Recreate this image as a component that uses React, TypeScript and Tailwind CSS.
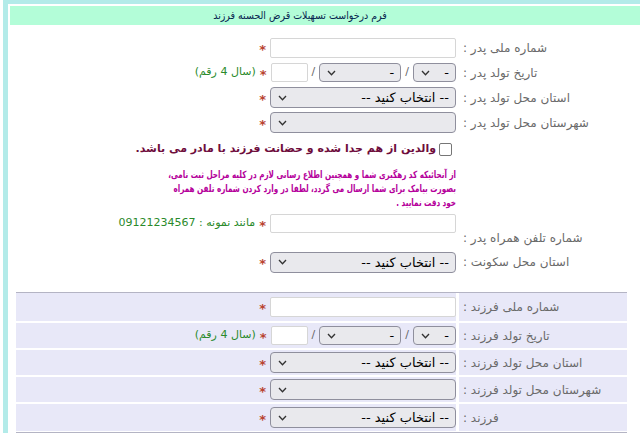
import React from "react";

type Children = { children?: React.ReactNode };

function Chevron() {
  return (
    <svg width="9" height="6" viewBox="0 0 9 6" className="shrink-0">
      <polyline
        points="1,1 4.5,4.8 8,1"
        fill="none"
        stroke="#333"
        strokeWidth="1.3"
      />
    </svg>
  );
}

function Select({
  w,
  h = "h-[21px]",
  text,
}: {
  w: string;
  h?: string;
  text?: string;
}) {
  return (
    <div
      className={`${w} ${h} flex shrink-0 items-center justify-between rounded-[4px] border border-[#8f8f9d] bg-[#e9e9ed] pl-[7px] pr-[6px] text-[13px] text-black`}
    >
      <span className="leading-none">{text}</span>
      <Chevron />
    </div>
  );
}

function TextBox({ w, h = "h-[20px]" }: { w: string; h?: string }) {
  return (
    <div
      className={`${w} ${h} shrink-0 rounded-[2px] border border-[#d6d6d6] bg-white`}
    />
  );
}

function Star() {
  return (
    <span className="mx-[4px] pt-[3px] text-[13px] font-bold leading-none text-[#b8432f]">
      *
    </span>
  );
}

function Hint({ children }: Children) {
  return <span className="text-[11px] text-[#2a8a2a]">{children}</span>;
}

function Row({
  label,
  children,
  h = "h-[25px]",
  shaded = false,
}: {
  label: string;
  children?: React.ReactNode;
  h?: string;
  shaded?: boolean;
}) {
  const bg = shaded ? "bg-[#e8e8f8]" : "";
  return (
    <div className={`flex gap-[3px] ${h}`}>
      <div
        className={`w-[168px] shrink-0 ${bg} flex items-center justify-end pl-[4px] text-[12px] text-[#6a6a6a]`}
      >
        <span>{label}</span>
      </div>
      <div className={`w-[440px] shrink-0 ${bg} flex items-center`}>
        {children}
      </div>
    </div>
  );
}

function DateFields() {
  return (
    <>
      <Select w="w-[43px]" h="h-[19px]" text="-" />
      <span className="mx-[4px] text-[11px] text-[#666]">/</span>
      <Select w="w-[82px]" h="h-[19px]" text="-" />
      <span className="mx-[4px] text-[11px] text-[#666]">/</span>
      <TextBox w="w-[37px]" h="h-[19px]" />
      <Star />
      <Hint>(سال 4 رقم)</Hint>
    </>
  );
}

export default function App() {
  return (
    <div className="h-[435px] w-[640px] overflow-hidden bg-white font-['DejaVu_Sans',sans-serif]">
      <div className="ml-[3px] w-[700px] border-l-[5px] border-t-[4px] border-[#b3ebe9] pt-[2px]">
        {/* header */}
        <div className="ml-[2px] flex h-[19px] items-center bg-[#b3fdd8]">
          <div
            dir="rtl"
            className="w-[580px] text-center font-['DejaVu_Sans_Condensed','DejaVu_Sans',sans-serif] text-[10.5px] leading-none text-[#06244f] font-stretch-condensed"
          >
            فرم درخواست تسهیلات قرض الحسنه فرزند
          </div>
        </div>

        <div className="flex pl-[8px]">
          <div dir="rtl" className="flex flex-col">
            {/* father section */}
            <div className="h-[10px]" />
            <Row label="شماره ملی پدر :">
              <TextBox w="w-[186px]" />
              <Star />
            </Row>
            <Row label="تاریخ تولد پدر :">
              <DateFields />
            </Row>
            <Row label="استان محل تولد پدر :">
              <Select w="w-[186px]" text="-- انتخاب کنید --" />
              <Star />
            </Row>
            <Row label="شهرستان محل تولد پدر :">
              <Select w="w-[186px]" />
              <Star />
            </Row>

            <div className="flex gap-[3px] pt-[3px]">
              <div className="w-[168px] shrink-0" />
              <div className="w-[440px] shrink-0">
                <div className="flex h-[22px] items-center pr-[4px]">
                  <span className="ml-[3px] h-[13px] w-[13px] shrink-0 rounded-[2px] border border-[#767676] bg-white" />
                  <span className="whitespace-nowrap text-[11px] font-bold text-[#6e0d3c]">
                    والدین از هم جدا شده و حضانت فرزند با مادر می باشد.
                  </span>
                </div>
                <p className="mt-[8px] origin-right scale-x-[0.8] whitespace-nowrap font-['DejaVu_Sans_Condensed','DejaVu_Sans',sans-serif] text-[10px] font-bold leading-[14px] text-[#b5009b] font-stretch-condensed">
                  از آنجائیکه کد رهگیری شما و همچنین اطلاع رسانی لازم در کلیه
                  مراحل ثبت نامی،
                  <br />
                  بصورت بیامک برای شما ارسال می گردد، لطفا در وارد کردن شماره
                  تلفن همراه
                  <br />
                  خود دقت نمایید .
                </p>
              </div>
            </div>

            <div className="flex gap-[3px]">
              <div className="flex w-[168px] shrink-0 items-end justify-end pb-[1px] pl-[4px] text-[12px] text-[#6a6a6a]">
                <span>شماره تلفن همراه پدر :</span>
              </div>
              <div className="w-[440px] shrink-0 pb-[15px] pt-[4px]">
                <div className="flex items-center">
                  <TextBox w="w-[186px]" h="h-[19px]" />
                  <Star />
                  <Hint>مانند نمونه : 09121234567</Hint>
                </div>
              </div>
            </div>

            <Row label="استان محل سکونت :" h="h-[28px]">
              <Select w="w-[186px]" text="-- انتخاب کنید --" />
              <Star />
            </Row>

            {/* child section */}
            <div className="mt-[16px] flex flex-col gap-[2px] border-y border-[#b4b4c4] pb-[1px]">
              <Row label="شماره ملی فرزند :" h="h-[28px]" shaded>
                <TextBox w="w-[186px]" />
                <Star />
              </Row>
              <Row label="تاریخ تولد فرزند :" shaded>
                <DateFields />
              </Row>
              <Row label="استان محل تولد فرزند :" shaded>
                <Select w="w-[186px]" text="-- انتخاب کنید --" />
                <Star />
              </Row>
              <Row label="شهرستان محل تولد فرزند :" shaded>
                <Select w="w-[186px]" />
                <Star />
              </Row>
              <Row label="فرزند :" h="h-[27px]" shaded>
                <Select w="w-[186px]" text="-- انتخاب کنید --" />
                <Star />
              </Row>
            </div>
          </div>
        </div>
      </div>
    </div>
  );
}
